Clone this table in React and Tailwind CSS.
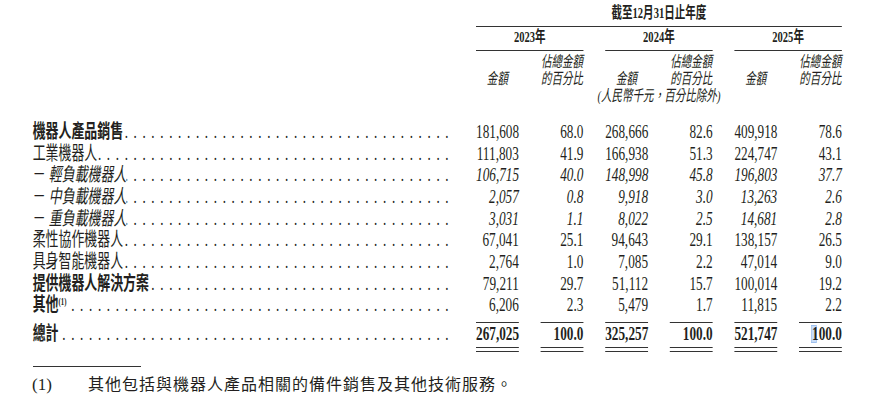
const rows = [
  { label: "機器人產品銷售", bold: true, v: ["181,608", "68.0", "268,666", "82.6", "409,918", "78.6"] },
  { label: "工業機器人", v: ["111,803", "41.9", "166,938", "51.3", "224,747", "43.1"] },
  { label: "輕負載機器人", sub: true, v: ["106,715", "40.0", "148,998", "45.8", "196,803", "37.7"] },
  { label: "中負載機器人", sub: true, v: ["2,057", "0.8", "9,918", "3.0", "13,263", "2.6"] },
  { label: "重負載機器人", sub: true, v: ["3,031", "1.1", "8,022", "2.5", "14,681", "2.8"] },
  { label: "柔性協作機器人", v: ["67,041", "25.1", "94,643", "29.1", "138,157", "26.5"] },
  { label: "具身智能機器人", v: ["2,764", "1.0", "7,085", "2.2", "47,014", "9.0"] },
  { label: "提供機器人解決方案", bold: true, v: ["79,211", "29.7", "51,112", "15.7", "100,014", "19.2"] },
  { label: "其他", bold: true, note: true, v: ["6,206", "2.3", "5,479", "1.7", "11,815", "2.2"] },
]

const totals = ["267,025", "100.0", "325,257", "100.0", "521,747", "100.0"]

const grid = "grid grid-cols-[620px_repeat(6,63px)] gap-x-[32px]"

const Dots = () => (
  <span className="flex-1 flex justify-end overflow-hidden font-normal not-italic">
    <span className="shrink-0 whitespace-nowrap tracking-[8.35px]">{".".repeat(70)}</span>
  </span>
)

const App = () => {
  return (
    <div className="w-[894px] h-[400px] overflow-hidden bg-white text-[#231f20] font-['Liberation_Serif','Noto_Sans_CJK_TC',serif]">
      {/* the source table is squeezed sideways, so lay it out wide and scale */}
      <div className="w-[1315px] origin-top-left scale-x-[0.68] pl-[48px]">
        <div className={grid}>
          <div className="col-start-2 col-span-6 h-[27px] border-b border-[#333] text-center text-[15.5px] font-bold leading-[26px]">
            截至12月31日止年度
          </div>
          <div className="col-start-2 col-span-2 h-[24px] border-b border-[#333] text-center text-[15.5px] font-bold leading-[20px]">2023年</div>
          <div className="col-start-4 col-span-2 h-[24px] border-b border-[#333] text-center text-[15.5px] font-bold leading-[20px]">2024年</div>
          <div className="col-start-6 col-span-2 h-[24px] border-b border-[#333] text-center text-[15.5px] font-bold leading-[20px]">2025年</div>
        </div>

        <div className={grid + " items-end pt-[2px] text-[15.5px] leading-[17px] italic text-center"}>
          <div></div>
          <div>金額</div>
          <div>佔總金額<br />的百分比</div>
          <div>金額</div>
          <div>佔總金額<br />的百分比</div>
          <div>金額</div>
          <div>佔總金額<br />的百分比</div>
          <div className="col-start-4 col-span-2 flex justify-center whitespace-nowrap">
            <span>(人民幣千元，百分比除外)</span>
          </div>
        </div>

        <div className="mt-[17px] text-[19.5px]">
          {rows.map((r, i) => (
            <div key={i} className={grid + " h-[21.67px] leading-[21.67px]"}>
              <div className="flex text-[19px]">
                <span className={`whitespace-nowrap ${r.bold ? "font-bold" : ""}`}>
                  {r.sub && <span>－ </span>}
                  <span className={r.sub ? "italic" : ""}>{r.label}</span>
                  {r.note && <span className="relative -top-[6px] text-[10px] font-bold">(1)</span>}
                </span>
                <Dots />
              </div>
              {r.v.map((n, j) => (
                <div key={j} className={`text-right ${r.sub ? "italic" : ""}`}>{n}</div>
              ))}
            </div>
          ))}

          <div className={grid + " mt-[6px]"}>
            <div className="flex pt-px text-[19px] leading-[22px] font-bold">
              <span className="whitespace-nowrap">總計</span>
              <Dots />
            </div>
            {totals.map((n, j) => (
              <div key={j} className="relative border-t border-[#333]">
                {j === 5 && (
                  <span className="absolute left-[18px] top-[2px] w-[8px] h-[18px] bg-[#c9ddf8] border border-[#9ec0ee]"></span>
                )}
                <div className="relative text-right font-bold leading-[22px]">{n}</div>
                <div className="mt-[2px] h-px bg-[#333]"></div>
                <div className="mt-[3px] h-px bg-[#333]"></div>
              </div>
            ))}
          </div>
        </div>
      </div>

      <div className="mt-[14px] ml-[33px] w-[108px] h-px bg-[#333]"></div>
      <div className="mt-[8px] flex leading-[20px]">
        <span className="ml-[32px] w-[56px] text-[17px]">(1)</span>
        <span className="text-[16px] tracking-[1px]">其他包括與機器人產品相關的備件銷售及其他技術服務。</span>
      </div>
    </div>
  )
}

export default App
